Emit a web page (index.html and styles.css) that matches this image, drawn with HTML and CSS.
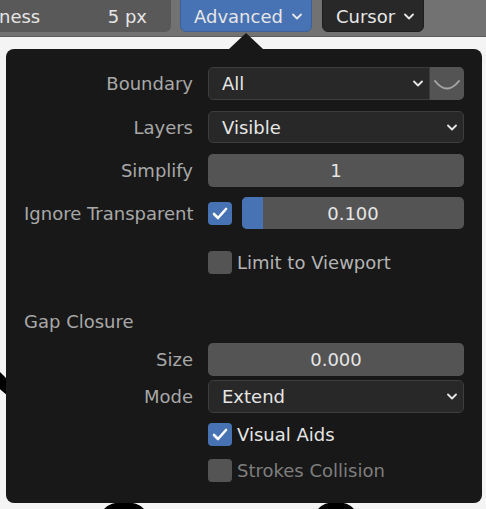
FILE: index.html
```html
<!DOCTYPE html>
<html lang="en">
<head>
  <meta charset="UTF-8">
  <title>Fill Tool - Advanced</title>
  <link rel="stylesheet" href="styles.css">
</head>
<body>
<svg class="canvas-strokes" width="486" height="509" viewBox="0 0 486 509">
  <path d="M-4 368 L8 380 L8 396 L-4 386 Z" fill="#000"/>
  <path d="M104 509 Q110 502 124 502 Q138 502 144 509 Z" fill="#000"/>
  <path d="M318 509 Q324 502 336 502 Q348 502 354 509 Z" fill="#000"/>
</svg>

<div class="header">
  <div class="field field-thickness">
    <span>ness</span>
    <span>5 px</span>
  </div>
  <div class="menu-btn active">
    Advanced
    <svg class="chevron" width="10" height="7" viewBox="0 0 10 7"><path d="M1 1.5 L5 5.5 L9 1.5" /></svg>
  </div>
  <div class="menu-btn">
    Cursor
    <svg class="chevron" width="10" height="7" viewBox="0 0 10 7"><path d="M1 1.5 L5 5.5 L9 1.5" /></svg>
  </div>
</div>

<div class="popover">
  <div class="arrow"></div>

  <div class="row r-boundary">
    <label>Boundary</label>
    <div class="combo">
      <div class="dropdown joined">
        <span>All</span>
        <svg class="chevron" width="10" height="7" viewBox="0 0 10 7"><path d="M1 1.5 L5 5.5 L9 1.5" /></svg>
      </div>
      <div class="icon-btn">
        <svg width="34" height="33" viewBox="0 0 34 33"><path d="M5 14 Q17 29 29 14" /></svg>
      </div>
    </div>
  </div>

  <div class="row r-layers">
    <label>Layers</label>
    <div class="dropdown">
      <span>Visible</span>
      <svg class="chevron" width="10" height="7" viewBox="0 0 10 7"><path d="M1 1.5 L5 5.5 L9 1.5" /></svg>
    </div>
  </div>

  <div class="row r-simplify">
    <label>Simplify</label>
    <div class="number">1</div>
  </div>

  <div class="row r-ignore">
    <label>Ignore Transparent</label>
    <div class="check-slider">
      <span class="checkbox checked">
        <svg width="24" height="23" viewBox="0 0 24 23"><path d="M6 12 L10 16 L18 7" /></svg>
      </span>
      <div class="number slider">
        <span class="slider-fill"></span>
        <span class="slider-value">0.100</span>
      </div>
    </div>
  </div>

  <div class="row r-limit">
    <span></span>
    <div class="check-row">
      <span class="checkbox"></span>
      <span class="check-label">Limit to Viewport</span>
    </div>
  </div>

  <div class="section-title">Gap Closure</div>

  <div class="row r-size">
    <label>Size</label>
    <div class="number">0.000</div>
  </div>

  <div class="row r-mode">
    <label>Mode</label>
    <div class="dropdown">
      <span>Extend</span>
      <svg class="chevron" width="10" height="7" viewBox="0 0 10 7"><path d="M1 1.5 L5 5.5 L9 1.5" /></svg>
    </div>
  </div>

  <div class="row r-visual">
    <span></span>
    <div class="check-row">
      <span class="checkbox checked">
        <svg width="24" height="23" viewBox="0 0 24 23"><path d="M6 12 L10 16 L18 7" /></svg>
      </span>
      <span class="check-label bright">Visual Aids</span>
    </div>
  </div>

  <div class="row r-strokes">
    <span></span>
    <div class="check-row">
      <span class="checkbox"></span>
      <span class="check-label dim">Strokes Collision</span>
    </div>
  </div>
</div>
</body>
</html>
```

FILE: styles.css
```css
body {
  margin: 0;
  width: 486px;
  height: 509px;
  overflow: hidden;
  background-color: #F4F4F4;
  font-family: "DejaVu Sans", sans-serif;
  font-size: 18px;
  color: #E6E6E6;
  position: relative;
}
.canvas-strokes {
  position: absolute;
  top: 0;
  left: 0;
}
.chevron path {
  fill: none;
  stroke: #E6E6E6;
  stroke-width: 1.8;
  stroke-linecap: round;
  stroke-linejoin: round;
}

/* header bar */
.header {
  position: relative;
  height: 36px;
  background-color: #727272;
  border-bottom: 1px solid #5E5E5E;
  display: flex;
  gap: 10px;
}
.field, .menu-btn {
  height: 40px;
  margin-top: -8px;
  box-sizing: border-box;
  padding-top: 8px;
  border-radius: 6px;
  display: flex;
  align-items: center;
}
.field-thickness {
  width: 181px;
  margin-left: -10px;
  padding-left: 9px;
  padding-right: 24px;
  background-color: #595959;
  justify-content: space-between;
  margin-right: -1px;
}
.menu-btn {
  padding-left: 13px;
  padding-right: 9px;
  gap: 9px;
  background-color: #282828;
  border: 1px solid #1E1E1E;
}
.menu-btn.active {
  background-color: #4772B3;
  border-color: #3C619A;
}

/* popover panel */
.popover {
  position: relative;
  margin: 12px 0 0 6px;
  width: 476px;
  height: 454px;
  box-sizing: border-box;
  padding: 18px 18px 0 18px;
  background-color: #181818;
  border-radius: 8px;
}
.arrow {
  position: absolute;
  top: -16px;
  left: 223px;
  width: 0;
  height: 0;
  border-left: 17px solid transparent;
  border-right: 17px solid transparent;
  border-bottom: 16px solid #181818;
}
.row {
  display: grid;
  grid-template-columns: 169px 1fr;
  column-gap: 15px;
  align-items: center;
  height: 32px;
}
.row label {
  text-align: right;
  color: #A8A8A8;
  white-space: nowrap;
}
.r-layers { margin-top: 12px; }
.r-simplify { margin-top: 11px; height: 33px; }
.r-ignore { margin-top: 10px; }
.r-limit { margin-top: 22px; height: 23px; }
.r-size { margin-top: 10px; height: 33px; }
.r-mode { margin-top: 4px; height: 33px; }
.r-visual { margin-top: 10px; height: 23px; }
.r-strokes { margin-top: 13px; height: 23px; }

.section-title {
  margin-top: 37px;
  height: 22px;
  line-height: 22px;
  color: #A8A8A8;
}

.dropdown {
  height: 100%;
  box-sizing: border-box;
  background-color: #282828;
  border: 1px solid #3D3D3D;
  border-radius: 5px;
  padding: 0 6px 0 13px;
  display: flex;
  align-items: center;
  justify-content: space-between;
}
.combo {
  display: flex;
  height: 100%;
}
.dropdown.joined {
  flex: 1;
  border-top-right-radius: 0;
  border-bottom-right-radius: 0;
}
.icon-btn {
  width: 34px;
  background-color: #545454;
  border-radius: 0 5px 5px 0;
}
.icon-btn svg {
  display: block;
}
.icon-btn path {
  fill: none;
  stroke: #A6A6A6;
  stroke-width: 2;
  stroke-linecap: round;
}

.number {
  height: 100%;
  background-color: #545454;
  border-radius: 5px;
  display: flex;
  align-items: center;
  justify-content: center;
}
.check-slider {
  display: flex;
  align-items: center;
  gap: 10px;
  height: 100%;
}
.slider {
  flex: 1;
  position: relative;
  overflow: hidden;
}
.slider-fill {
  position: absolute;
  left: 0;
  top: 0;
  bottom: 0;
  width: 21px;
  background-color: #4772B3;
}
.slider-value {
  position: relative;
}

.checkbox {
  width: 24px;
  height: 23px;
  flex: none;
  border-radius: 4px;
  background-color: #545454;
}
.checkbox.checked {
  background-color: #4772B3;
}
.checkbox svg {
  display: block;
}
.checkbox path {
  fill: none;
  stroke: #FFFFFF;
  stroke-width: 2.6;
  stroke-linecap: round;
  stroke-linejoin: round;
}
.check-row {
  display: flex;
  align-items: center;
  gap: 5px;
}
.check-label {
  color: #B4B4B4;
}
.check-label.bright {
  color: #E6E6E6;
}
.check-label.dim {
  color: #7E7E7E;
}
```
